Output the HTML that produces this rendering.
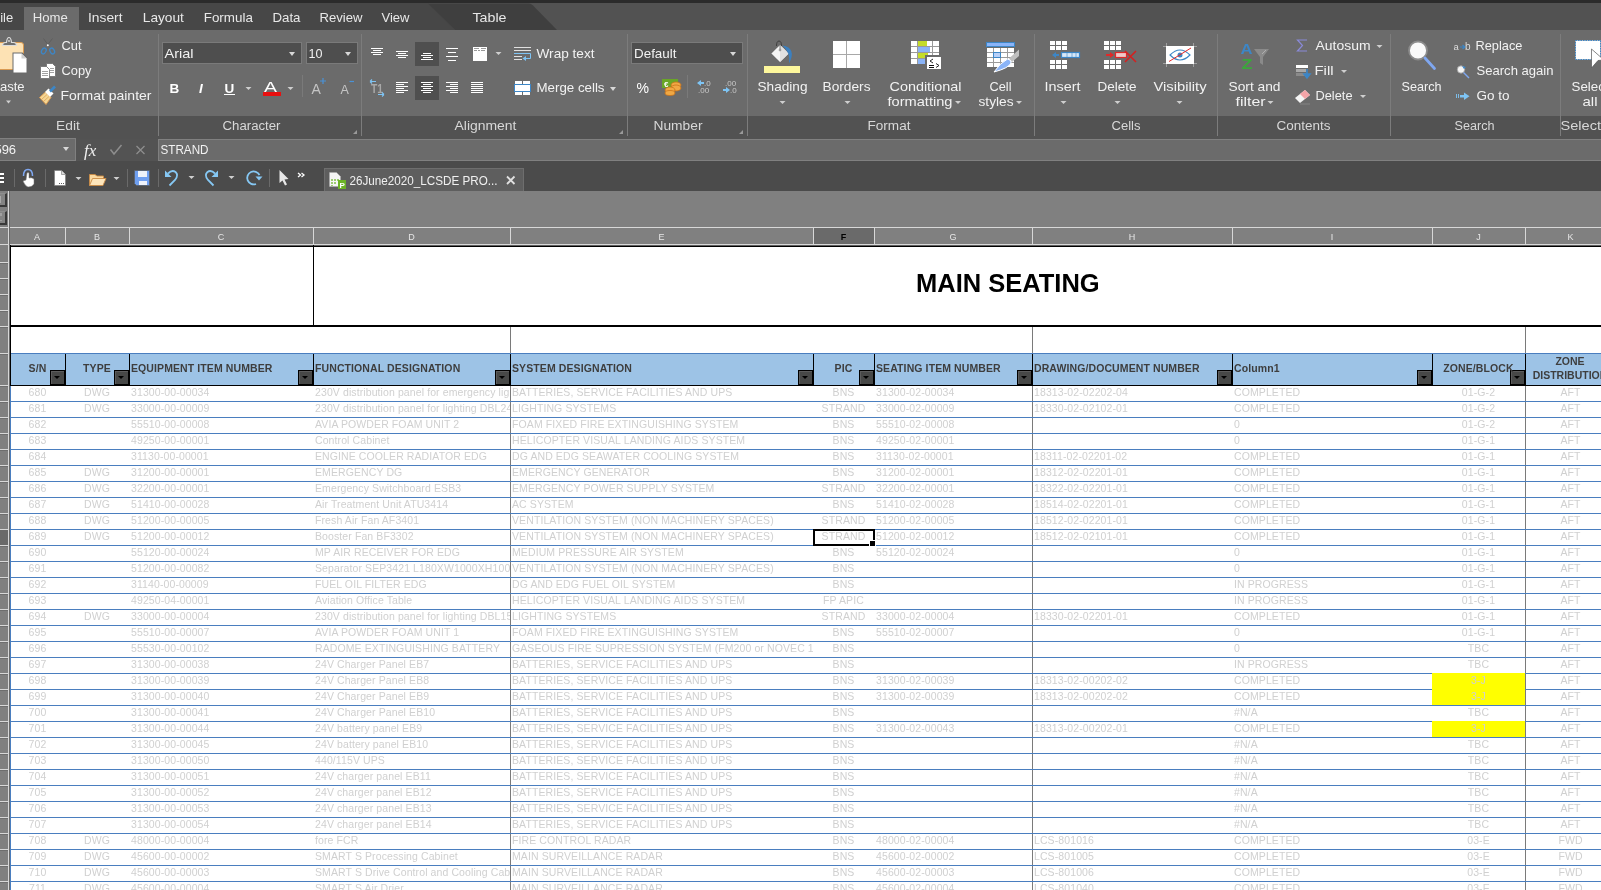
<!DOCTYPE html><html><head><meta charset="utf-8"><style>*{margin:0;padding:0;box-sizing:border-box}
html,body{width:1601px;height:890px;overflow:hidden;background:#808080;font-family:"Liberation Sans",sans-serif;position:relative}
.a{position:absolute}
#topstrip{position:absolute;left:0;top:0;width:1601px;height:3px;background:#2b2b2b}
#tabbar{position:absolute;left:0;top:3px;width:1601px;height:27px;background:#525252}
.tab{position:absolute;top:9px;font-size:14px;color:#e8e8e8;white-space:nowrap;line-height:16px}
#hometab{position:absolute;left:24px;top:7px;width:55px;height:23px;background:#6b6b6b}
#ribbon{position:absolute;left:0;top:30px;width:1601px;height:86px;background:#6b6b6b}
#labels{position:absolute;left:0;top:116px;width:1601px;height:23px;background:#525252}
.lbl{position:absolute;top:119px;font-size:13px;color:#dcdcdc;white-space:nowrap;line-height:16px}
.vsep{position:absolute;width:1px;background:#7c7c7c}
.rt{position:absolute;font-size:14px;color:#f0f0f0;white-space:nowrap;line-height:16px}
.dd{position:absolute;width:0;height:0;border-left:3.5px solid transparent;border-right:3.5px solid transparent;border-top:4px solid #d8d8d8}
.box{position:absolute;background:#4e4e4e;border:1px solid #7a7a7a}
#fbar{position:absolute;left:0;top:139px;width:1601px;height:22px;background:#535353}
#tbar{position:absolute;left:0;top:161px;width:1601px;height:30px;background:#4b4b4b}
#grid{position:absolute;left:0;top:0;width:1601px;height:890px}
.ch{position:absolute;top:228px;height:16px;font-size:9px;color:#e6e6e6;text-align:center;line-height:18px}
.ch.sel{background:#6a6a6a;color:#000;font-weight:bold}
.chsep{position:absolute;top:228px;width:1px;height:16px;background:#d8d8d8}
.c{position:absolute;height:15px;font-size:10.5px;line-height:15px;color:#d0d0d0;white-space:nowrap;overflow:hidden;letter-spacing:0.1px}
.ac{text-align:center}
.al{text-align:left}
.yel{position:absolute;height:16px;background:#ffff00}
.ddb{position:absolute;width:15px;height:15px;background:#474847;border:1px solid #000;box-shadow:inset 1px 1px 0 #5c5c5c}
.ddb::after{content:"";position:absolute;left:2.5px;top:5px;border-left:3px solid transparent;border-right:3px solid transparent;border-top:3px solid #000}
.ht{position:absolute;top:362px;font-size:10.5px;font-weight:bold;color:#3e3e3e;white-space:nowrap;line-height:12px;letter-spacing:0.1px}
.ht2{position:absolute;font-size:10.5px;font-weight:bold;color:#3e3e3e;white-space:nowrap;line-height:14px;overflow:hidden}
.title{position:absolute;font-size:25.5px;font-weight:bold;color:#000;white-space:nowrap;line-height:30px}
</style></head><body><div id="root" style="position:absolute;left:0;top:0;width:1601px;height:890px;will-change:transform">
<div id="topstrip"></div>
<div id="tabbar"></div>
<svg class="a" style="left:0;top:3px" width="1601" height="27"><polygon points="0,0 428,0 455,27 0,27" fill="#474747"/><path d="M428,0.5 H529 Q531,0.5 533,2.5 L557,27 H455 Z" fill="#3f3f3f"/></svg>
<div id="hometab"></div>
<div id="ribbon"></div>
<div id="labels"></div>
<div class="vsep" style="left:158px;top:34px;height:102px"></div>
<div class="vsep" style="left:361px;top:34px;height:102px"></div>
<div class="vsep" style="left:627px;top:34px;height:102px"></div>
<div class="vsep" style="left:747px;top:34px;height:102px"></div>
<div class="vsep" style="left:1034px;top:34px;height:102px"></div>
<div class="vsep" style="left:1217px;top:34px;height:102px"></div>
<div class="vsep" style="left:1390px;top:34px;height:102px"></div>
<div class="vsep" style="left:1560px;top:34px;height:102px"></div>
<!-- Edit group -->
<!-- Character -->
<div class="box" style="left:162px;top:42px;width:140px;height:22px"></div>
<div class="dd" style="left:289px;top:52px"></div>
<div class="box" style="left:306px;top:42px;width:52px;height:22px"></div>
<div class="dd" style="left:345px;top:52px"></div>
<!-- Number -->
<div class="box" style="left:631px;top:42px;width:112px;height:22px"></div>
<div class="dd" style="left:730px;top:52px"></div>
<div class="dd" style="left:610px;top:87px"></div>
<!-- Format -->
<!-- formula bar -->
<div id="fbar"></div>
<div class="box" style="left:-10px;top:138px;width:86px;height:23px;background:#6b6b6b;border-color:#808080"></div>
<div class="dd" style="left:63px;top:147px"></div>
<div class="box" style="left:158px;top:139px;width:1450px;height:22px;background:#6b6b6b;border-color:#808080"></div>
<!-- toolbar -->
<div id="tbar"></div>
<div class="a" style="left:324px;top:168px;width:200px;height:23px;background:#5e5e5e;border:1px solid #6e6e6e;border-bottom:none"></div>
<svg class="a" style="left:0;top:0" width="1601" height="195">
<!-- PASTE -->
<path d="M-1,42.5 H21 Q23.5,42.5 23.5,45 V69.5 H-1 Z" fill="#fde2b4" stroke="#d99a52" stroke-width="1"/>
<path d="M2.5,45.5 Q2.5,42.5 5.5,42.5 H6.5 Q7,37.5 9,37.5 Q11,37.5 11.5,42.5 H13.5 Q16.5,42.5 16.5,45.5 Z" fill="#6f6f6f" stroke="#dcdcdc" stroke-width="1.2"/>
<circle cx="9" cy="41" r="0.9" fill="#dcdcdc"/>
<path d="M12.5,52.5 H22.5 L27.5,57.5 V73.5 H12.5 Z" fill="#6b6b6b"/>
<path d="M13.5,53.5 H21.5 L26.5,58.5 V72.5 H13.5 Z" fill="#ffffff"/>
<path d="M21.5,53.5 V58.5 H26.5" fill="#d0d0d0"/>
<path d="M6,100.5 H11 L8.5,103.5 Z" fill="#cfcfcf"/>
<!-- CUT -->
<path d="M43.5,38.5 L48.5,45.5 M52.5,38.5 L47,45.5" stroke="#5c5c5c" stroke-width="0.9"/>
<circle cx="47.8" cy="45.3" r="1" fill="#ffffff"/>
<ellipse cx="43.8" cy="51" rx="2.1" ry="3.1" fill="none" stroke="#3d86c6" stroke-width="1.3" transform="rotate(30 43.8 51)"/>
<ellipse cx="52.2" cy="51" rx="2.1" ry="3.1" fill="none" stroke="#3d86c6" stroke-width="1.3" transform="rotate(-30 52.2 51)"/>
<!-- COPY -->
<path d="M46.5,63.5 H52.5 L55.5,66.5 V76.5 H46.5 Z" fill="#fff" stroke="#6b6b6b" stroke-width="0.8"/>
<path d="M40.5,66.5 H46.5 L49.5,69.5 V78.5 H40.5 Z" fill="#fff" stroke="#6b6b6b" stroke-width="0.8"/>
<path d="M42,71.5 H48 M42,73.5 H48 M42,75.5 H48 M50,68.5 H54 M50,70.5 H54 M50,72.5 H54" stroke="#8a8a8a" stroke-width="0.8"/>
<!-- FORMAT PAINTER -->
<path d="M39.5,97.5 L45.5,92 L51,97.5 L46,104.5 Z" fill="#f5d693" stroke="#d99a52" stroke-width="1"/>
<path d="M41.5,99.5 L47,94.5 M43.5,101.5 L49,96.5" stroke="#d99a52" stroke-width="0.7"/>
<path d="M45,92 L48.5,88.5 L53.5,93.5 L50,97 Z" fill="#ffffff"/>
<path d="M50,91.5 L55,86.5" stroke="#3d86c6" stroke-width="2.6"/>
<!-- CHARACTER small buttons -->
<text x="169.5" y="93" font-family="Liberation Sans" font-weight="bold" font-size="13.5" fill="#fff">B</text>
<text x="199" y="93" font-family="Liberation Sans" font-weight="bold" font-style="italic" font-size="13.5" fill="#fff">I</text>
<text x="224.5" y="93" font-family="Liberation Sans" font-weight="bold" font-size="13.5" fill="#fff">U</text>
<rect x="224" y="94" width="11" height="1" fill="#fff"/>
<path d="M245.5,87 H251.5 L248.5,90 Z" fill="#cfcfcf"/>
<text x="264" y="92" font-family="Liberation Sans" font-size="14" fill="#fff" textLength="13" lengthAdjust="spacingAndGlyphs">A</text>
<rect x="263" y="92" width="18" height="4" fill="#e81010"/>
<path d="M287.5,87 H293.5 L290.5,90 Z" fill="#cfcfcf"/>
<rect x="302" y="75" width="1" height="22" fill="#7a7a7a"/>
<text x="311.5" y="93.5" font-family="Liberation Sans" font-size="14" fill="#c4c4c4">A</text>
<path d="M320,81 H326 M323,78 V84" stroke="#4a92d6" stroke-width="1.2"/>
<text x="340.5" y="93.5" font-family="Liberation Sans" font-size="12.5" fill="#c4c4c4">A</text>
<path d="M349.5,81.5 H354" stroke="#4a92d6" stroke-width="1.2"/>
<!-- T1 icon (character) -->
<g id="t1">
<text x="371" y="93" font-family="Liberation Sans" font-weight="bold" font-size="12" fill="#a8a8a8" textLength="12" lengthAdjust="spacingAndGlyphs">T1</text>
<path d="M370,81.5 H376 M370,81.5 L372,79.5 M370,81.5 L372,83.5" stroke="#7ec4f4" stroke-width="1.1" fill="none"/>
<path d="M378,94.5 H384 M384,94.5 L382,92.5 M384,94.5 L382,96.5" stroke="#7ec4f4" stroke-width="1.1" fill="none"/>
</g>
<!-- ALIGNMENT -->
<rect x="415" y="42" width="24" height="24" fill="#4f4f4f"/>
<rect x="415" y="76" width="24" height="24" fill="#4f4f4f"/>
<g fill="#ffffff" shape-rendering="crispEdges">
<rect x="371" y="48" width="12" height="1"/><rect x="373" y="50" width="8" height="1"/><rect x="371" y="52" width="12" height="1"/><rect x="373" y="54" width="8" height="1"/>
<rect x="396" y="51" width="12" height="1"/><rect x="398" y="53" width="8" height="1"/><rect x="396" y="55" width="12" height="1"/><rect x="398" y="57" width="8" height="1"/>
<rect x="423" y="53" width="8" height="1"/><rect x="421" y="55" width="12" height="1"/><rect x="423" y="57" width="8" height="1"/><rect x="421" y="59" width="12" height="1"/>
<rect x="446" y="48" width="12" height="1"/><rect x="448" y="52" width="8" height="1"/><rect x="446" y="56" width="12" height="1"/><rect x="448" y="60" width="8" height="1"/>
<rect x="473" y="47" width="14" height="14"/>
<rect x="396" y="82" width="12" height="1"/><rect x="396" y="84" width="8" height="1"/><rect x="396" y="86" width="12" height="1"/><rect x="396" y="88" width="8" height="1"/><rect x="396" y="90" width="12" height="1"/><rect x="396" y="92" width="8" height="1"/>
<rect x="421" y="82" width="12" height="1"/><rect x="423" y="84" width="8" height="1"/><rect x="421" y="86" width="12" height="1"/><rect x="423" y="88" width="8" height="1"/><rect x="421" y="90" width="12" height="1"/><rect x="423" y="92" width="8" height="1"/>
<rect x="446" y="82" width="12" height="1"/><rect x="450" y="84" width="8" height="1"/><rect x="446" y="86" width="12" height="1"/><rect x="450" y="88" width="8" height="1"/><rect x="446" y="90" width="12" height="1"/><rect x="450" y="92" width="8" height="1"/>
<rect x="471" y="82" width="12" height="1"/><rect x="471" y="84" width="12" height="1"/><rect x="471" y="86" width="12" height="1"/><rect x="471" y="88" width="12" height="1"/><rect x="471" y="90" width="12" height="1"/><rect x="471" y="92" width="12" height="1"/>
</g>
<g fill="#9a9a9a" shape-rendering="crispEdges"><rect x="474" y="48" width="5" height="1"/><rect x="481" y="48" width="5" height="1"/><rect x="474" y="50" width="3" height="1"/><rect x="478" y="50" width="2" height="1"/><rect x="481" y="50" width="4" height="1"/></g>
<path d="M495.5,52 H501.5 L498.5,55 Z" fill="#cfcfcf"/>
<!-- WRAP TEXT -->
<g shape-rendering="crispEdges">
<rect x="514" y="47" width="17" height="1" fill="#e0e0e0"/>
<rect x="514" y="50" width="17" height="1" fill="#e0e0e0"/>
<rect x="514" y="53" width="13" height="1" fill="#7ec4f4"/>
<rect x="514" y="56" width="8" height="1" fill="#e0e0e0"/>
<rect x="514" y="59" width="8" height="1" fill="#e0e0e0"/>
</g>
<path d="M526,53.5 H530.5 V58.5 H525" stroke="#7ec4f4" stroke-width="1" fill="none"/>
<path d="M522.5,58.5 L526,56 V61 Z" fill="#7ec4f4"/>
<!-- MERGE CELLS -->
<g fill="#fff" shape-rendering="crispEdges">
<rect x="515" y="81" width="7" height="3"/><rect x="523" y="81" width="7" height="3"/>
<rect x="515" y="92" width="7" height="3"/><rect x="523" y="92" width="7" height="3"/>
</g>
<rect x="514.5" y="84.5" width="16" height="7" fill="#fff" stroke="#3d86c6" stroke-width="1"/>
<!-- NUMBER -->
<text x="636.5" y="92.5" font-family="Liberation Sans" font-size="14" fill="#fff" textLength="12.5" lengthAdjust="spacingAndGlyphs">%</text>
<rect x="662" y="79" width="16" height="9" fill="#6aa626"/>
<text x="664" y="87" font-family="Liberation Sans" font-weight="bold" font-size="8" fill="#fff">€</text>
<ellipse cx="676" cy="85" rx="5" ry="3" fill="#f0a844" stroke="#c9731a" stroke-width="0.8"/>
<ellipse cx="676" cy="88" rx="5" ry="3" fill="#f0a844" stroke="#c9731a" stroke-width="0.8"/>
<ellipse cx="670" cy="90" rx="5" ry="3" fill="#f0a844" stroke="#c9731a" stroke-width="0.8"/>
<ellipse cx="670" cy="93" rx="5" ry="2.5" fill="#f0a844" stroke="#c9731a" stroke-width="0.8"/>
<rect x="687" y="75" width="1" height="23" fill="#7a7a7a"/>
<path d="M697,83 L701,80 V82 H704 V84 H701 V86 Z" fill="#7ec4f4"/>
<text x="704" y="86" font-family="Liberation Sans" font-size="8" fill="#c8c8c8">.0</text>
<text x="698" y="93" font-family="Liberation Sans" font-size="8" fill="#c8c8c8">.00</text>
<text x="725" y="86" font-family="Liberation Sans" font-size="8" fill="#c8c8c8">.00</text>
<path d="M730,90 L726,87 V89 H723 V91 H726 V93 Z" fill="#7ec4f4"/>
<text x="730" y="93" font-family="Liberation Sans" font-size="8" fill="#c8c8c8">.0</text>
</svg>
<svg class="a" style="left:0;top:0" width="1601" height="195">
<!-- SHADING -->
<path d="M776.5,46 Q776.5,41 779,41 Q781.5,41 781.5,46" fill="none" stroke="#3a3a3a" stroke-width="0.9"/>
<path d="M780,45 L788.6,53.5 L780,62 L771.4,53.5 Z" fill="#f4f4f4"/>
<path d="M780,45 L788.6,53.5 L780,62" fill="#e0e0e0"/>
<path d="M780,45 V49" stroke="#555" stroke-width="0.7"/>
<circle cx="780" cy="50" r="0.9" fill="none" stroke="#555" stroke-width="0.6"/>
<path d="M782.5,45.5 Q797,48 789,63.5 Q791,53 782.5,45.5 Z" fill="#3b80c0"/>
<rect x="764" y="66" width="36" height="7" fill="#fdf79c"/>
<path d="M779.5,101 H785.5 L782.5,104 Z" fill="#cfcfcf"/>
<!-- BORDERS -->
<rect x="833" y="41" width="27" height="27" fill="#fff"/>
<rect x="846" y="41" width="1" height="27" fill="#a8a8a8"/>
<rect x="833" y="54" width="27" height="1" fill="#a8a8a8"/>
<path d="M844.5,101 H850.5 L847.5,104 Z" fill="#cfcfcf"/>
<!-- CONDITIONAL FORMATTING -->
<g shape-rendering="crispEdges">
<rect x="911" y="41" width="28" height="23" fill="#fff"/>
<rect x="918" y="41" width="9" height="5" fill="#c5dc2a"/>
<rect x="918" y="47" width="12" height="5" fill="#8ab4f8"/>
<rect x="918" y="53" width="10" height="5" fill="#c5dc2a"/>
<rect x="918" y="59" width="7" height="5" fill="#8ab4f8"/>
<rect x="917" y="41" width="1" height="23" fill="#9a9a9a"/>
<rect x="932" y="41" width="1" height="23" fill="#9a9a9a"/>
<rect x="911" y="46" width="28" height="1" fill="#9a9a9a"/>
<rect x="911" y="52" width="28" height="1" fill="#9a9a9a"/>
<rect x="911" y="58" width="28" height="1" fill="#9a9a9a"/>
<rect x="925" y="55" width="17" height="15" fill="#6b6b6b"/>
<rect x="927" y="57" width="14" height="12" fill="#fff"/>
</g>
<path d="M933,59 L930,61 L933,63 M936,63.5 L939,65.5 L936,67.5" stroke="#111" stroke-width="0.9" fill="none"/><rect x="929" y="65" width="5" height="1" fill="#111"/><rect x="929" y="67" width="5" height="1" fill="#111"/>
<!-- CELL STYLES -->
<g shape-rendering="crispEdges">
<rect x="986" y="42" width="29" height="5" fill="#3d86c6"/>
<rect x="987" y="43" width="27" height="3" fill="#8ab4f8"/>
<rect x="987" y="48" width="27" height="19" fill="#fff"/>
<rect x="993" y="48" width="1" height="19" fill="#9a9a9a"/><rect x="1000" y="48" width="1" height="19" fill="#9a9a9a"/><rect x="1007" y="48" width="1" height="19" fill="#9a9a9a"/>
<rect x="987" y="52" width="27" height="1" fill="#9a9a9a"/><rect x="987" y="57" width="27" height="1" fill="#9a9a9a"/><rect x="987" y="62" width="27" height="1" fill="#9a9a9a"/>
<rect x="993" y="52" width="8" height="6" fill="#3d86c6"/>
<rect x="994" y="53" width="6" height="4" fill="#b8d0f8"/>
</g>
<path d="M1019,49.5 V56 L1012,62 L1009,58.5 Z" fill="#c0c0c0"/>
<path d="M1007.5,59 Q1012,60 1011,63 Q1009,68 994,72 Q1000,63 1007.5,59 Z" fill="#8ab4f8" stroke="#fff" stroke-width="1"/>
<!-- INSERT -->
<g fill="#fff" shape-rendering="crispEdges">
<rect x="1050" y="41" width="5" height="4"/><rect x="1056" y="41" width="5" height="4"/><rect x="1062" y="41" width="5" height="4"/>
<rect x="1050" y="46" width="5" height="4"/><rect x="1056" y="46" width="5" height="4"/><rect x="1062" y="46" width="5" height="4"/>
<rect x="1050" y="60" width="5" height="4"/><rect x="1056" y="60" width="5" height="4"/><rect x="1062" y="60" width="5" height="4"/>
<rect x="1050" y="65" width="5" height="4"/><rect x="1056" y="65" width="5" height="4"/><rect x="1062" y="65" width="5" height="4"/>
<rect x="1104" y="41" width="5" height="4"/><rect x="1110" y="41" width="5" height="4"/><rect x="1116" y="41" width="5" height="4"/>
<rect x="1104" y="46" width="5" height="4"/><rect x="1110" y="46" width="5" height="4"/><rect x="1116" y="46" width="5" height="4"/>
<rect x="1104" y="60" width="5" height="4"/><rect x="1110" y="60" width="5" height="4"/><rect x="1116" y="60" width="5" height="4"/>
<rect x="1104" y="65" width="5" height="4"/><rect x="1110" y="65" width="5" height="4"/><rect x="1116" y="65" width="5" height="4"/>
</g>
<path d="M1052,55 L1056,52 V54 H1059 V56 H1056 V58 Z" fill="#3d86c6"/>
<rect x="1061.5" y="52.5" width="18" height="5" fill="#d8e8f8" stroke="#3d86c6" stroke-width="1.2"/>
<path d="M1067,53 V57 M1072,53 V57 M1076,53 V57" stroke="#3d86c6" stroke-width="0.6"/>
<path d="M1060.5,101 H1066.5 L1063.5,104 Z" fill="#cfcfcf"/>
<!-- DELETE -->
<path d="M1114,55 L1110,52 V54 H1106 V56 H1110 V58 Z" fill="#e02828"/>
<rect x="1115.5" y="52.5" width="11" height="5" fill="#f0c8c8" stroke="#e02828" stroke-width="1.2"/>
<path d="M1125,51 L1136,62 M1136,51 L1125,62" stroke="#d42020" stroke-width="1.6"/>
<path d="M1114.5,101 H1120.5 L1117.5,104 Z" fill="#cfcfcf"/>
<!-- VISIBILITY -->
<path d="M1163,46.5 H1197 M1163,63.5 H1197 M1166.5,43 V67 M1193.5,43 V67" stroke="#a0a0a0" stroke-width="1"/>
<rect x="1166" y="46" width="28" height="18" fill="#fff"/>
<path d="M1170,55 Q1180,45 1190,55 Q1180,65 1170,55 Z" fill="none" stroke="#3d86c6" stroke-width="1.1"/>
<circle cx="1180" cy="55" r="2.5" fill="#3d86c6"/>
<path d="M1169,61.5 L1191,48" stroke="#e82828" stroke-width="1"/>
<path d="M1176.5,101 H1182.5 L1179.5,104 Z" fill="#cfcfcf"/>
<!-- SORT & FILTER -->
<text x="1240.5" y="54" font-family="Liberation Sans" font-weight="bold" font-size="15" fill="#3d86c6" textLength="12" lengthAdjust="spacingAndGlyphs">A</text>
<text x="1241.5" y="69" font-family="Liberation Sans" font-weight="bold" font-size="15" fill="#3aa83a" textLength="11" lengthAdjust="spacingAndGlyphs">Z</text>
<path d="M1254,49 H1269 L1263,57 V65 L1260,63 V57 Z" fill="#8a8a8a"/>
<path d="M1262,54 L1266,50" stroke="#c8c8c8" stroke-width="0.6"/>
<path d="M1267.5,101 H1273.5 L1270.5,104 Z" fill="#cfcfcf"/>
<!-- AUTOSUM -->
<path d="M1307,40 H1297.5 L1302.5,45.5 L1297.5,51 H1307" fill="none" stroke="#8a8ad8" stroke-width="1.2"/>
<path d="M1376.5,45 H1382.5 L1379.5,48 Z" fill="#cfcfcf"/>
<!-- FILL -->
<rect x="1296" y="65" width="12" height="3" fill="#fff"/>
<rect x="1296" y="69" width="10" height="3" fill="#a8a8a8"/>
<rect x="1296" y="73" width="10" height="3" fill="#8a8a8a"/>
<path d="M1307,69 V76 M1304,74 L1307,78 L1310,74 Z" stroke="#3d86c6" stroke-width="1.6" fill="#3d86c6"/>
<path d="M1341,70 H1347 L1344,73 Z" fill="#cfcfcf"/>
<!-- ERASER -->
<path d="M1295,98 L1305,90 L1310,95 L1300,103 Z" fill="#f4f4f4"/>
<path d="M1300,94 L1305,90 L1310,95 L1305,99 Z" fill="#f4a4a8"/>
<path d="M1300,104 H1310" stroke="#8a8a8a" stroke-width="0.8"/>
<path d="M1360,95 H1366 L1363,98 Z" fill="#cfcfcf"/>
<!-- SEARCH -->
<circle cx="1418" cy="50.5" r="9" fill="#fafafa" stroke="#8c8c8c" stroke-width="1.8"/>
<path d="M1425,58 L1434.5,68.5" stroke="#7fa7f0" stroke-width="2.8" stroke-linecap="round"/>
<text x="1453.5" y="50" font-family="Liberation Sans" font-size="9.5" fill="#dcdcdc">a</text>
<path d="M1460,47 H1464 M1462.5,45 L1465,47 L1462.5,49" stroke="#3d86c6" stroke-width="1.2" fill="none"/>
<text x="1465" y="50" font-family="Liberation Sans" font-size="10" fill="#dcdcdc">b</text>
<circle cx="1461" cy="69.5" r="3.7" fill="#f4f4f4" stroke="#9a9a9a" stroke-width="0.8"/>
<path d="M1463.5,72.5 L1469,78" stroke="#7fa7f0" stroke-width="1.4"/>
<path d="M1462,66 L1466,67 L1464,69 Z" fill="#3d86c6"/>
<path d="M1456.5,94 V98 M1458.5,94 V98" stroke="#7ec4f4" stroke-width="0.9"/><rect x="1460" y="95" width="5" height="2.5" fill="#7ec4f4"/><path d="M1464,92.5 L1469.5,96.2 L1464,100 Z" fill="#7ec4f4"/>
<!-- SELECT ALL -->
<rect x="1575.5" y="40.5" width="25" height="19" fill="#fff" stroke="#3d86c6" stroke-width="1" stroke-dasharray="1.5,1"/>
<path d="M1591.5,49 L1604,60 L1598,60.5 L1591.5,68 Z" fill="#fff" stroke="#555" stroke-width="0.7"/>
<!-- TOOLBAR -->
<rect x="0" y="173" width="4" height="2" fill="#fff"/><rect x="0" y="177" width="4" height="2" fill="#fff"/><rect x="0" y="181" width="4" height="2" fill="#fff"/>
<rect x="14" y="169" width="1" height="18" fill="#6a6a6a"/>
<path d="M23.5,176 Q23.5,169.5 28,169.5 Q32.5,169.5 32.5,176" fill="none" stroke="#7fa7f0" stroke-width="1.5"/>
<path d="M27,173 Q28,172 29,173 V178 Q31,177 34,179 V184 Q32,187 28,187 Q25,186 23,181 L26,180 Z" fill="#fff" stroke="#777" stroke-width="0.5"/>
<rect x="45" y="169" width="1" height="18" fill="#6a6a6a"/>
<path d="M54.5,170.5 H61.5 L65.5,174.5 V185.5 H54.5 Z" fill="#fff" stroke="#777" stroke-width="0.6"/>
<path d="M61.5,170.5 V174.5 H65.5" fill="#ddd" stroke="#777" stroke-width="0.6"/>
<path d="M59,183.5 H60 M61,183.5 H62 M63,183.5 H64" stroke="#333" stroke-width="0.8"/>
<path d="M75.5,177 H81.5 L78.5,180 Z" fill="#cfcfcf"/>
<path d="M89.5,185.5 V174.5 H95 L97,176 H103.5 V179" fill="#fbd9a0" stroke="#c98a44" stroke-width="0.9"/>
<path d="M89.5,185.5 L92.5,178.5 H106 L103,185.5 Z" fill="#fde6bc" stroke="#c98a44" stroke-width="0.9"/>
<path d="M113.5,177 H119.5 L116.5,180 Z" fill="#cfcfcf"/>
<rect x="127" y="169" width="1" height="18" fill="#6a6a6a"/>
<path d="M134.5,170.5 H149.5 V185.5 H136.5 L134.5,183.5 Z" fill="#6f9ff0" stroke="#5a5a5a" stroke-width="0.6"/>
<rect x="138" y="171" width="9" height="6" fill="#eef2fa"/>
<rect x="139" y="181" width="8" height="4" fill="#eef2fa"/>
<rect x="158" y="169" width="1" height="18" fill="#6a6a6a"/>
<!-- undo -->
<path d="M168,173.5 Q172,169.5 175.5,172 Q179,175 175,180 L169.5,185.5" fill="none" stroke="#86c8f4" stroke-width="1.8"/>
<path d="M165,170.5 L165,177 L171.5,177 Z" fill="#86c8f4"/>
<path d="M188.5,176 H194.5 L191.5,179 Z" fill="#cfcfcf"/>
<!-- redo -->
<path d="M215,173.5 Q211,169.5 207.5,172 Q204,175 208,180 L213.5,185.5" fill="none" stroke="#86c8f4" stroke-width="1.8"/>
<path d="M218,170.5 L218,177 L211.5,177 Z" fill="#86c8f4"/>
<path d="M228.5,176 H234.5 L231.5,179 Z" fill="#cfcfcf"/>
<!-- repeat -->
<path d="M259.5,175 A6.5,6.5 0 1 0 256,184" fill="none" stroke="#86c8f4" stroke-width="1.8"/>
<path d="M255.5,176.5 H262.5 L259,180.5 Z" fill="#86c8f4"/>
<rect x="269" y="169" width="1" height="18" fill="#6a6a6a"/>
<!-- pointer -->
<path d="M279.5,170 V183 L282.5,180.5 L285,185.5 L287,184.5 L284.5,179.5 L288.5,179 Z" fill="#e8e8e8"/>
<path d="M298,173 L300.5,175 L298,177 M301.5,173 L304,175 L301.5,177" stroke="#fff" stroke-width="1.3" fill="none"/>
<!-- doc tab icon -->
<path d="M329.5,172.5 H336.5 L340.5,176.5 V186.5 H329.5 Z" fill="#f4f4f4" stroke="#aaa" stroke-width="0.5"/>
<g fill="#9ccc70" shape-rendering="crispEdges"><rect x="331" y="179" width="2" height="2"/><rect x="334" y="179" width="2" height="2"/><rect x="337" y="179" width="2" height="2"/><rect x="331" y="182" width="2" height="2"/><rect x="334" y="182" width="2" height="2"/><rect x="331" y="185" width="2" height="1"/></g>
<rect x="338" y="180" width="8" height="9" fill="#6cb226"/>
<text x="339.5" y="188" font-family="Liberation Sans" font-weight="bold" font-size="8" fill="#fff">P</text>
<path d="M507,176.5 L514.5,184 M514.5,176.5 L507,184" stroke="#e0e0e0" stroke-width="1.8"/>
<!-- formula bar icons -->
<text x="84" y="156" font-family="Liberation Serif" font-style="italic" font-size="17" fill="#f0f0f0">fx</text>
<path d="M110.5,149.5 L114,154 L121.5,145" fill="none" stroke="#8e8e8e" stroke-width="1.5"/>
<path d="M136.5,146 L144.5,154 M144.5,146 L136.5,154" stroke="#8e8e8e" stroke-width="1.3"/>
<path d="M955,101 H961 L958,104 Z" fill="#cfcfcf"/>
<path d="M1016,101 H1022 L1019,104 Z" fill="#cfcfcf"/>
<path d="M357,130 V134 H353 Z" fill="#9a9a9a"/>
<path d="M623,130 V134 H619 Z" fill="#9a9a9a"/>
<path d="M743,130 V134 H739 Z" fill="#9a9a9a"/>
</svg>
<svg class="a" style="left:0;top:0" width="1601" height="195" font-family="Liberation Sans">
<text x="13.2" y="22" font-size="13" fill="#e8e8e8" text-anchor="end">File</text>
<text x="32.8" y="22" font-size="13" fill="#e8e8e8" textLength="35.1" lengthAdjust="spacingAndGlyphs">Home</text>
<text x="88.0" y="22" font-size="13" fill="#e8e8e8" textLength="34.5" lengthAdjust="spacingAndGlyphs">Insert</text>
<text x="142.8" y="22" font-size="13" fill="#e8e8e8" textLength="41.1" lengthAdjust="spacingAndGlyphs">Layout</text>
<text x="203.7" y="22" font-size="13" fill="#e8e8e8" textLength="49.2" lengthAdjust="spacingAndGlyphs">Formula</text>
<text x="272.5" y="22" font-size="13" fill="#e8e8e8" textLength="28.0" lengthAdjust="spacingAndGlyphs">Data</text>
<text x="319.5" y="22" font-size="13" fill="#e8e8e8" textLength="43.0" lengthAdjust="spacingAndGlyphs">Review</text>
<text x="381.5" y="22" font-size="13" fill="#e8e8e8" textLength="28.0" lengthAdjust="spacingAndGlyphs">View</text>
<text x="472.5" y="22" font-size="13" fill="#e8e8e8" textLength="34.0" lengthAdjust="spacingAndGlyphs">Table</text>
<text x="24.5" y="91" font-size="13" fill="#f2f2f2" text-anchor="end">Paste</text>
<text x="61.5" y="50" font-size="13" fill="#f2f2f2" textLength="20.0" lengthAdjust="spacingAndGlyphs">Cut</text>
<text x="61.5" y="75" font-size="13" fill="#f2f2f2" textLength="30.0" lengthAdjust="spacingAndGlyphs">Copy</text>
<text x="60.5" y="100" font-size="13" fill="#f2f2f2" textLength="91.0" lengthAdjust="spacingAndGlyphs">Format painter</text>
<text x="164.5" y="58" font-size="13" fill="#f2f2f2" textLength="29.0" lengthAdjust="spacingAndGlyphs">Arial</text>
<text x="308.5" y="58" font-size="13" fill="#f2f2f2" textLength="14.0" lengthAdjust="spacingAndGlyphs">10</text>
<text x="536.5" y="58" font-size="13" fill="#f2f2f2" textLength="58.0" lengthAdjust="spacingAndGlyphs">Wrap text</text>
<text x="536.5" y="92" font-size="13" fill="#f2f2f2" textLength="68.0" lengthAdjust="spacingAndGlyphs">Merge cells</text>
<text x="634.0" y="58" font-size="13" fill="#f2f2f2" textLength="42.5" lengthAdjust="spacingAndGlyphs">Default</text>
<text x="757.5" y="91" font-size="13" fill="#f2f2f2" textLength="50.0" lengthAdjust="spacingAndGlyphs">Shading</text>
<text x="822.5" y="91" font-size="13" fill="#f2f2f2" textLength="48.0" lengthAdjust="spacingAndGlyphs">Borders</text>
<text x="889.5" y="91" font-size="13" fill="#f2f2f2" textLength="72.0" lengthAdjust="spacingAndGlyphs">Conditional</text>
<text x="887.5" y="106" font-size="13" fill="#f2f2f2" textLength="65.0" lengthAdjust="spacingAndGlyphs">formatting</text>
<text x="989.5" y="91" font-size="13" fill="#f2f2f2" textLength="22.0" lengthAdjust="spacingAndGlyphs">Cell</text>
<text x="978.5" y="106" font-size="13" fill="#f2f2f2" textLength="35.0" lengthAdjust="spacingAndGlyphs">styles</text>
<text x="1044.5" y="91" font-size="13" fill="#f2f2f2" textLength="36.0" lengthAdjust="spacingAndGlyphs">Insert</text>
<text x="1097.5" y="91" font-size="13" fill="#f2f2f2" textLength="39.0" lengthAdjust="spacingAndGlyphs">Delete</text>
<text x="1153.5" y="91" font-size="13" fill="#f2f2f2" textLength="53.0" lengthAdjust="spacingAndGlyphs">Visibility</text>
<text x="1228.5" y="91" font-size="13" fill="#f2f2f2" textLength="52.0" lengthAdjust="spacingAndGlyphs">Sort and</text>
<text x="1235.5" y="106" font-size="13" fill="#f2f2f2" textLength="30.0" lengthAdjust="spacingAndGlyphs">filter</text>
<text x="1315.5" y="50" font-size="13" fill="#f2f2f2" textLength="55.0" lengthAdjust="spacingAndGlyphs">Autosum</text>
<text x="1314.5" y="75" font-size="13" fill="#f2f2f2" textLength="19.0" lengthAdjust="spacingAndGlyphs">Fill</text>
<text x="1315.5" y="100" font-size="13" fill="#f2f2f2" textLength="37.0" lengthAdjust="spacingAndGlyphs">Delete</text>
<text x="1401.5" y="91" font-size="13" fill="#f2f2f2" textLength="40.0" lengthAdjust="spacingAndGlyphs">Search</text>
<text x="1475.5" y="50" font-size="13" fill="#f2f2f2" textLength="47.0" lengthAdjust="spacingAndGlyphs">Replace</text>
<text x="1476.5" y="75" font-size="13" fill="#f2f2f2" textLength="77.0" lengthAdjust="spacingAndGlyphs">Search again</text>
<text x="1476.5" y="100" font-size="13" fill="#f2f2f2" textLength="33.0" lengthAdjust="spacingAndGlyphs">Go to</text>
<text x="1571.5" y="91" font-size="13" fill="#f2f2f2" textLength="37.0" lengthAdjust="spacingAndGlyphs">Select</text>
<text x="1582.5" y="106" font-size="13" fill="#f2f2f2" textLength="15.0" lengthAdjust="spacingAndGlyphs">all</text>
<text x="56.0" y="130" font-size="12.5" fill="#d8d8d8" textLength="23.8" lengthAdjust="spacingAndGlyphs">Edit</text>
<text x="222.5" y="130" font-size="12.5" fill="#d8d8d8" textLength="58.0" lengthAdjust="spacingAndGlyphs">Character</text>
<text x="454.5" y="130" font-size="12.5" fill="#d8d8d8" textLength="62.0" lengthAdjust="spacingAndGlyphs">Alignment</text>
<text x="653.5" y="130" font-size="12.5" fill="#d8d8d8" textLength="49.0" lengthAdjust="spacingAndGlyphs">Number</text>
<text x="867.5" y="130" font-size="12.5" fill="#d8d8d8" textLength="43.0" lengthAdjust="spacingAndGlyphs">Format</text>
<text x="1111.5" y="130" font-size="12.5" fill="#d8d8d8" textLength="29.0" lengthAdjust="spacingAndGlyphs">Cells</text>
<text x="1276.5" y="130" font-size="12.5" fill="#d8d8d8" textLength="54.0" lengthAdjust="spacingAndGlyphs">Contents</text>
<text x="1454.5" y="130" font-size="12.5" fill="#d8d8d8" textLength="40.0" lengthAdjust="spacingAndGlyphs">Search</text>
<text x="1560.5" y="130" font-size="12.5" fill="#d8d8d8" textLength="60.0" lengthAdjust="spacingAndGlyphs">Selection</text>
<text x="16.1" y="154" font-size="13" fill="#f2f2f2" text-anchor="end">F596</text>
<text x="160.5" y="154" font-size="13" fill="#f2f2f2" textLength="48.0" lengthAdjust="spacingAndGlyphs">STRAND</text>
<text x="349.5" y="185" font-size="13" fill="#f0f0f0" textLength="148.0" lengthAdjust="spacingAndGlyphs">26June2020_LCSDE PRO...</text>
</svg>
<div class="a" style="left:10px;top:245px;width:1591px;height:645px;background:#fff"></div>
<div class="a" style="left:0;top:227px;width:1601px;height:1px;background:#d8d8d8"></div>
<div class="a" style="left:0;top:244px;width:1601px;height:1px;background:#d8d8d8"></div>
<div class="a" style="left:8px;top:191px;width:1px;height:699px;background:#d8d8d8"></div>
<div class="a" style="left:9px;top:191px;width:1px;height:699px;background:#6a6a6a"></div>
<div class="a" style="left:-3px;top:193px;width:10px;height:14px;border-right:2px solid #383838;border-bottom:2px solid #383838;border-top:1px solid #8e8e8e;background:#838383"></div>
<div class="a" style="left:-3px;top:211px;width:10px;height:14px;border-right:2px solid #383838;border-bottom:2px solid #383838;border-top:1px solid #8e8e8e;background:#838383"></div>
<div class="a" style="left:0;top:196px;width:1px;height:7px;background:#a8a8a8"></div>
<div class="a" style="left:0;top:213px;width:2px;height:3px;background:#a0a0a0"></div>
<div class="a" style="left:0;top:220px;width:2px;height:1px;background:#a0a0a0"></div>
<div class="a" style="left:0;top:534px;width:2px;height:7px;background:#111"></div>
<div class="a" style="left:0;top:262px;width:8px;height:1px;background:#d8d8d8"></div>
<div class="a" style="left:0;top:263px;width:8px;height:1px;background:#6e6e6e"></div>
<div class="a" style="left:0;top:278px;width:8px;height:1px;background:#d8d8d8"></div>
<div class="a" style="left:0;top:279px;width:8px;height:1px;background:#6e6e6e"></div>
<div class="a" style="left:0;top:294px;width:8px;height:1px;background:#d8d8d8"></div>
<div class="a" style="left:0;top:295px;width:8px;height:1px;background:#6e6e6e"></div>
<div class="a" style="left:0;top:310px;width:8px;height:1px;background:#d8d8d8"></div>
<div class="a" style="left:0;top:311px;width:8px;height:1px;background:#6e6e6e"></div>
<div class="a" style="left:0;top:326px;width:8px;height:1px;background:#d8d8d8"></div>
<div class="a" style="left:0;top:327px;width:8px;height:1px;background:#6e6e6e"></div>
<div class="a" style="left:0;top:353px;width:8px;height:1px;background:#d8d8d8"></div>
<div class="a" style="left:0;top:354px;width:8px;height:1px;background:#6e6e6e"></div>
<div class="a" style="left:0;top:385px;width:8px;height:1px;background:#d8d8d8"></div>
<div class="a" style="left:0;top:386px;width:8px;height:1px;background:#6e6e6e"></div>
<div class="a" style="left:0;top:401px;width:8px;height:1px;background:#d8d8d8"></div>
<div class="a" style="left:0;top:402px;width:8px;height:1px;background:#6e6e6e"></div>
<div class="a" style="left:0;top:417px;width:8px;height:1px;background:#d8d8d8"></div>
<div class="a" style="left:0;top:418px;width:8px;height:1px;background:#6e6e6e"></div>
<div class="a" style="left:0;top:433px;width:8px;height:1px;background:#d8d8d8"></div>
<div class="a" style="left:0;top:434px;width:8px;height:1px;background:#6e6e6e"></div>
<div class="a" style="left:0;top:449px;width:8px;height:1px;background:#d8d8d8"></div>
<div class="a" style="left:0;top:450px;width:8px;height:1px;background:#6e6e6e"></div>
<div class="a" style="left:0;top:465px;width:8px;height:1px;background:#d8d8d8"></div>
<div class="a" style="left:0;top:466px;width:8px;height:1px;background:#6e6e6e"></div>
<div class="a" style="left:0;top:481px;width:8px;height:1px;background:#d8d8d8"></div>
<div class="a" style="left:0;top:482px;width:8px;height:1px;background:#6e6e6e"></div>
<div class="a" style="left:0;top:497px;width:8px;height:1px;background:#d8d8d8"></div>
<div class="a" style="left:0;top:498px;width:8px;height:1px;background:#6e6e6e"></div>
<div class="a" style="left:0;top:513px;width:8px;height:1px;background:#d8d8d8"></div>
<div class="a" style="left:0;top:514px;width:8px;height:1px;background:#6e6e6e"></div>
<div class="a" style="left:0;top:529px;width:8px;height:1px;background:#d8d8d8"></div>
<div class="a" style="left:0;top:530px;width:8px;height:1px;background:#6e6e6e"></div>
<div class="a" style="left:0;top:545px;width:8px;height:1px;background:#d8d8d8"></div>
<div class="a" style="left:0;top:546px;width:8px;height:1px;background:#6e6e6e"></div>
<div class="a" style="left:0;top:561px;width:8px;height:1px;background:#d8d8d8"></div>
<div class="a" style="left:0;top:562px;width:8px;height:1px;background:#6e6e6e"></div>
<div class="a" style="left:0;top:577px;width:8px;height:1px;background:#d8d8d8"></div>
<div class="a" style="left:0;top:578px;width:8px;height:1px;background:#6e6e6e"></div>
<div class="a" style="left:0;top:593px;width:8px;height:1px;background:#d8d8d8"></div>
<div class="a" style="left:0;top:594px;width:8px;height:1px;background:#6e6e6e"></div>
<div class="a" style="left:0;top:609px;width:8px;height:1px;background:#d8d8d8"></div>
<div class="a" style="left:0;top:610px;width:8px;height:1px;background:#6e6e6e"></div>
<div class="a" style="left:0;top:625px;width:8px;height:1px;background:#d8d8d8"></div>
<div class="a" style="left:0;top:626px;width:8px;height:1px;background:#6e6e6e"></div>
<div class="a" style="left:0;top:641px;width:8px;height:1px;background:#d8d8d8"></div>
<div class="a" style="left:0;top:642px;width:8px;height:1px;background:#6e6e6e"></div>
<div class="a" style="left:0;top:657px;width:8px;height:1px;background:#d8d8d8"></div>
<div class="a" style="left:0;top:658px;width:8px;height:1px;background:#6e6e6e"></div>
<div class="a" style="left:0;top:673px;width:8px;height:1px;background:#d8d8d8"></div>
<div class="a" style="left:0;top:674px;width:8px;height:1px;background:#6e6e6e"></div>
<div class="a" style="left:0;top:689px;width:8px;height:1px;background:#d8d8d8"></div>
<div class="a" style="left:0;top:690px;width:8px;height:1px;background:#6e6e6e"></div>
<div class="a" style="left:0;top:705px;width:8px;height:1px;background:#d8d8d8"></div>
<div class="a" style="left:0;top:706px;width:8px;height:1px;background:#6e6e6e"></div>
<div class="a" style="left:0;top:721px;width:8px;height:1px;background:#d8d8d8"></div>
<div class="a" style="left:0;top:722px;width:8px;height:1px;background:#6e6e6e"></div>
<div class="a" style="left:0;top:737px;width:8px;height:1px;background:#d8d8d8"></div>
<div class="a" style="left:0;top:738px;width:8px;height:1px;background:#6e6e6e"></div>
<div class="a" style="left:0;top:753px;width:8px;height:1px;background:#d8d8d8"></div>
<div class="a" style="left:0;top:754px;width:8px;height:1px;background:#6e6e6e"></div>
<div class="a" style="left:0;top:769px;width:8px;height:1px;background:#d8d8d8"></div>
<div class="a" style="left:0;top:770px;width:8px;height:1px;background:#6e6e6e"></div>
<div class="a" style="left:0;top:785px;width:8px;height:1px;background:#d8d8d8"></div>
<div class="a" style="left:0;top:786px;width:8px;height:1px;background:#6e6e6e"></div>
<div class="a" style="left:0;top:801px;width:8px;height:1px;background:#d8d8d8"></div>
<div class="a" style="left:0;top:802px;width:8px;height:1px;background:#6e6e6e"></div>
<div class="a" style="left:0;top:817px;width:8px;height:1px;background:#d8d8d8"></div>
<div class="a" style="left:0;top:818px;width:8px;height:1px;background:#6e6e6e"></div>
<div class="a" style="left:0;top:833px;width:8px;height:1px;background:#d8d8d8"></div>
<div class="a" style="left:0;top:834px;width:8px;height:1px;background:#6e6e6e"></div>
<div class="a" style="left:0;top:849px;width:8px;height:1px;background:#d8d8d8"></div>
<div class="a" style="left:0;top:850px;width:8px;height:1px;background:#6e6e6e"></div>
<div class="a" style="left:0;top:865px;width:8px;height:1px;background:#d8d8d8"></div>
<div class="a" style="left:0;top:866px;width:8px;height:1px;background:#6e6e6e"></div>
<div class="a" style="left:0;top:881px;width:8px;height:1px;background:#d8d8d8"></div>
<div class="a" style="left:0;top:882px;width:8px;height:1px;background:#6e6e6e"></div>
<div class="a" style="left:0;top:530px;width:8px;height:15px;background:#6a6a6a"></div>
<div class="a" style="left:10px;top:245px;width:1591px;height:1px;background:#5e5e5e"></div>
<div class="a" style="left:10px;top:246px;width:1591px;height:1px;background:#000"></div>
<div class="a" style="left:10px;top:245px;width:1px;height:140px;background:#000"></div>
<div class="a" style="left:313px;top:245px;width:1px;height:81px;background:#000"></div>
<div class="a" style="left:10px;top:325px;width:1591px;height:2px;background:#000"></div>
<div class="a" style="left:510px;top:327px;width:1px;height:563px;background:#7a7a7a"></div>
<div class="a" style="left:1032px;top:327px;width:1px;height:563px;background:#7a7a7a"></div>
<div class="a" style="left:1525px;top:327px;width:1px;height:563px;background:#7a7a7a"></div>
<div class="a" style="left:11px;top:353px;width:1590px;height:1px;background:#4a7ebf"></div>
<div class="a" style="left:11px;top:354px;width:1590px;height:31px;background:#9dc3e6"></div>
<div class="a" style="left:10px;top:385px;width:1591px;height:1px;background:#000"></div>
<div class="a" style="left:65px;top:354px;width:1px;height:31px;background:#000"></div>
<div class="a" style="left:129px;top:354px;width:1px;height:31px;background:#000"></div>
<div class="a" style="left:313px;top:354px;width:1px;height:31px;background:#000"></div>
<div class="a" style="left:510px;top:354px;width:1px;height:31px;background:#000"></div>
<div class="a" style="left:813px;top:354px;width:1px;height:31px;background:#000"></div>
<div class="a" style="left:874px;top:354px;width:1px;height:31px;background:#000"></div>
<div class="a" style="left:1032px;top:354px;width:1px;height:31px;background:#000"></div>
<div class="a" style="left:1232px;top:354px;width:1px;height:31px;background:#000"></div>
<div class="a" style="left:1432px;top:354px;width:1px;height:31px;background:#000"></div>
<div class="a" style="left:1525px;top:354px;width:1px;height:31px;background:#000"></div>
<div class="ddb" style="left:50px;top:370px"></div>
<div class="ddb" style="left:114px;top:370px"></div>
<div class="ddb" style="left:298px;top:370px"></div>
<div class="ddb" style="left:495px;top:370px"></div>
<div class="ddb" style="left:798px;top:370px"></div>
<div class="ddb" style="left:859px;top:370px"></div>
<div class="ddb" style="left:1017px;top:370px"></div>
<div class="ddb" style="left:1217px;top:370px"></div>
<div class="ddb" style="left:1417px;top:370px"></div>
<div class="ddb" style="left:1510px;top:370px"></div>
<div class="a" style="left:10px;top:401px;width:1591px;height:1px;background:#4a7ebf"></div>
<div class="a" style="left:10px;top:417px;width:1591px;height:1px;background:#4a7ebf"></div>
<div class="a" style="left:10px;top:433px;width:1591px;height:1px;background:#4a7ebf"></div>
<div class="a" style="left:10px;top:449px;width:1591px;height:1px;background:#4a7ebf"></div>
<div class="a" style="left:10px;top:465px;width:1591px;height:1px;background:#4a7ebf"></div>
<div class="a" style="left:10px;top:481px;width:1591px;height:1px;background:#4a7ebf"></div>
<div class="a" style="left:10px;top:497px;width:1591px;height:1px;background:#4a7ebf"></div>
<div class="a" style="left:10px;top:513px;width:1591px;height:1px;background:#4a7ebf"></div>
<div class="a" style="left:10px;top:529px;width:1591px;height:1px;background:#4a7ebf"></div>
<div class="a" style="left:10px;top:545px;width:1591px;height:1px;background:#4a7ebf"></div>
<div class="a" style="left:10px;top:561px;width:1591px;height:1px;background:#4a7ebf"></div>
<div class="a" style="left:10px;top:577px;width:1591px;height:1px;background:#4a7ebf"></div>
<div class="a" style="left:10px;top:593px;width:1591px;height:1px;background:#4a7ebf"></div>
<div class="a" style="left:10px;top:609px;width:1591px;height:1px;background:#4a7ebf"></div>
<div class="a" style="left:10px;top:625px;width:1591px;height:1px;background:#4a7ebf"></div>
<div class="a" style="left:10px;top:641px;width:1591px;height:1px;background:#4a7ebf"></div>
<div class="a" style="left:10px;top:657px;width:1591px;height:1px;background:#4a7ebf"></div>
<div class="a" style="left:10px;top:673px;width:1591px;height:1px;background:#4a7ebf"></div>
<div class="a" style="left:10px;top:689px;width:1591px;height:1px;background:#4a7ebf"></div>
<div class="a" style="left:10px;top:705px;width:1591px;height:1px;background:#4a7ebf"></div>
<div class="a" style="left:10px;top:721px;width:1591px;height:1px;background:#4a7ebf"></div>
<div class="a" style="left:10px;top:737px;width:1591px;height:1px;background:#4a7ebf"></div>
<div class="a" style="left:10px;top:753px;width:1591px;height:1px;background:#4a7ebf"></div>
<div class="a" style="left:10px;top:769px;width:1591px;height:1px;background:#4a7ebf"></div>
<div class="a" style="left:10px;top:785px;width:1591px;height:1px;background:#4a7ebf"></div>
<div class="a" style="left:10px;top:801px;width:1591px;height:1px;background:#4a7ebf"></div>
<div class="a" style="left:10px;top:817px;width:1591px;height:1px;background:#4a7ebf"></div>
<div class="a" style="left:10px;top:833px;width:1591px;height:1px;background:#4a7ebf"></div>
<div class="a" style="left:10px;top:849px;width:1591px;height:1px;background:#4a7ebf"></div>
<div class="a" style="left:10px;top:865px;width:1591px;height:1px;background:#4a7ebf"></div>
<div class="a" style="left:10px;top:881px;width:1591px;height:1px;background:#4a7ebf"></div>
<div class="a" style="left:10px;top:386px;width:1px;height:504px;background:#4a7ebf"></div>
<div class="ht" style="left:10px;width:55px;text-align:center;">S/N</div>
<div class="ht" style="left:65px;width:64px;text-align:center;">TYPE</div>
<div class="ht" style="left:131px;">EQUIPMENT ITEM NUMBER</div>
<div class="ht" style="left:315px;">FUNCTIONAL DESIGNATION</div>
<div class="ht" style="left:512px;">SYSTEM DESIGNATION</div>
<div class="ht" style="left:813px;width:61px;text-align:center;">PIC</div>
<div class="ht" style="left:876px;">SEATING ITEM NUMBER</div>
<div class="ht" style="left:1034px;">DRAWING/DOCUMENT NUMBER</div>
<div class="ht" style="left:1234px;">Column1</div>
<div class="ht" style="left:1432px;width:93px;text-align:center;">ZONE/BLOCK</div>
<div class="ht2" style="left:1525px;width:90px;top:354px;text-align:center">ZONE<br>DISTRIBUTION</div>
<div class="title" style="left:916px;top:268px">MAIN SEATING</div>
<div id="grid">
<div class="ch" style="left:9px;width:56px">A</div>
<div class="ch" style="left:65px;width:64px">B</div>
<div class="ch" style="left:129px;width:184px">C</div>
<div class="ch" style="left:313px;width:197px">D</div>
<div class="ch" style="left:510px;width:303px">E</div>
<div class="ch sel" style="left:813px;width:61px">F</div>
<div class="ch" style="left:874px;width:158px">G</div>
<div class="ch" style="left:1032px;width:200px">H</div>
<div class="ch" style="left:1232px;width:200px">I</div>
<div class="ch" style="left:1432px;width:93px">J</div>
<div class="ch" style="left:1525px;width:91px">K</div>
<div class="chsep" style="left:65px"></div>
<div class="chsep" style="left:129px"></div>
<div class="chsep" style="left:313px"></div>
<div class="chsep" style="left:510px"></div>
<div class="chsep" style="left:813px"></div>
<div class="chsep" style="left:874px"></div>
<div class="chsep" style="left:1032px"></div>
<div class="chsep" style="left:1232px"></div>
<div class="chsep" style="left:1432px"></div>
<div class="chsep" style="left:1525px"></div>
<div class="c ac" style="left:11px;top:385px;width:53px">680</div>
<div class="c ac" style="left:66px;top:385px;width:62px">DWG</div>
<div class="c al" style="left:131px;top:385px;width:182px">31300-00-00034</div>
<div class="c al" style="left:315px;top:385px;width:195px">230V distribution panel for emergency lighting</div>
<div class="c al" style="left:512px;top:385px;width:301px">BATTERIES, SERVICE FACILITIES AND UPS</div>
<div class="c ac" style="left:814px;top:385px;width:59px">BNS</div>
<div class="c al" style="left:876px;top:385px;width:156px">31300-02-00034</div>
<div class="c al" style="left:1034px;top:385px;width:198px">18313-02-02202-04</div>
<div class="c al" style="left:1234px;top:385px;width:198px">COMPLETED</div>
<div class="c ac" style="left:1433px;top:385px;width:91px">01-G-2</div>
<div class="c ac" style="left:1526px;top:385px;width:89px">AFT</div>
<div class="c ac" style="left:11px;top:401px;width:53px">681</div>
<div class="c ac" style="left:66px;top:401px;width:62px">DWG</div>
<div class="c al" style="left:131px;top:401px;width:182px">33000-00-00009</div>
<div class="c al" style="left:315px;top:401px;width:195px">230V distribution panel for lighting DBL24</div>
<div class="c al" style="left:512px;top:401px;width:301px">LIGHTING SYSTEMS</div>
<div class="c ac" style="left:814px;top:401px;width:59px">STRAND</div>
<div class="c al" style="left:876px;top:401px;width:156px">33000-02-00009</div>
<div class="c al" style="left:1034px;top:401px;width:198px">18330-02-02102-01</div>
<div class="c al" style="left:1234px;top:401px;width:198px">COMPLETED</div>
<div class="c ac" style="left:1433px;top:401px;width:91px">01-G-2</div>
<div class="c ac" style="left:1526px;top:401px;width:89px">AFT</div>
<div class="c ac" style="left:11px;top:417px;width:53px">682</div>
<div class="c al" style="left:131px;top:417px;width:182px">55510-00-00008</div>
<div class="c al" style="left:315px;top:417px;width:195px">AVIA POWDER FOAM UNIT 2</div>
<div class="c al" style="left:512px;top:417px;width:301px">FOAM FIXED FIRE EXTINGUISHING SYSTEM</div>
<div class="c ac" style="left:814px;top:417px;width:59px">BNS</div>
<div class="c al" style="left:876px;top:417px;width:156px">55510-02-00008</div>
<div class="c al" style="left:1234px;top:417px;width:198px">0</div>
<div class="c ac" style="left:1433px;top:417px;width:91px">01-G-2</div>
<div class="c ac" style="left:1526px;top:417px;width:89px">AFT</div>
<div class="c ac" style="left:11px;top:433px;width:53px">683</div>
<div class="c al" style="left:131px;top:433px;width:182px">49250-00-00001</div>
<div class="c al" style="left:315px;top:433px;width:195px">Control Cabinet</div>
<div class="c al" style="left:512px;top:433px;width:301px">HELICOPTER VISUAL LANDING AIDS SYSTEM</div>
<div class="c ac" style="left:814px;top:433px;width:59px">BNS</div>
<div class="c al" style="left:876px;top:433px;width:156px">49250-02-00001</div>
<div class="c al" style="left:1234px;top:433px;width:198px">0</div>
<div class="c ac" style="left:1433px;top:433px;width:91px">01-G-1</div>
<div class="c ac" style="left:1526px;top:433px;width:89px">AFT</div>
<div class="c ac" style="left:11px;top:449px;width:53px">684</div>
<div class="c al" style="left:131px;top:449px;width:182px">31130-00-00001</div>
<div class="c al" style="left:315px;top:449px;width:195px">ENGINE COOLER RADIATOR EDG</div>
<div class="c al" style="left:512px;top:449px;width:301px">DG AND EDG SEAWATER COOLING SYSTEM</div>
<div class="c ac" style="left:814px;top:449px;width:59px">BNS</div>
<div class="c al" style="left:876px;top:449px;width:156px">31130-02-00001</div>
<div class="c al" style="left:1034px;top:449px;width:198px">18311-02-02201-02</div>
<div class="c al" style="left:1234px;top:449px;width:198px">COMPLETED</div>
<div class="c ac" style="left:1433px;top:449px;width:91px">01-G-1</div>
<div class="c ac" style="left:1526px;top:449px;width:89px">AFT</div>
<div class="c ac" style="left:11px;top:465px;width:53px">685</div>
<div class="c ac" style="left:66px;top:465px;width:62px">DWG</div>
<div class="c al" style="left:131px;top:465px;width:182px">31200-00-00001</div>
<div class="c al" style="left:315px;top:465px;width:195px">EMERGENCY DG</div>
<div class="c al" style="left:512px;top:465px;width:301px">EMERGENCY GENERATOR</div>
<div class="c ac" style="left:814px;top:465px;width:59px">BNS</div>
<div class="c al" style="left:876px;top:465px;width:156px">31200-02-00001</div>
<div class="c al" style="left:1034px;top:465px;width:198px">18312-02-02201-01</div>
<div class="c al" style="left:1234px;top:465px;width:198px">COMPLETED</div>
<div class="c ac" style="left:1433px;top:465px;width:91px">01-G-1</div>
<div class="c ac" style="left:1526px;top:465px;width:89px">AFT</div>
<div class="c ac" style="left:11px;top:481px;width:53px">686</div>
<div class="c ac" style="left:66px;top:481px;width:62px">DWG</div>
<div class="c al" style="left:131px;top:481px;width:182px">32200-00-00001</div>
<div class="c al" style="left:315px;top:481px;width:195px">Emergency Switchboard ESB3</div>
<div class="c al" style="left:512px;top:481px;width:301px">EMERGENCY POWER SUPPLY SYSTEM</div>
<div class="c ac" style="left:814px;top:481px;width:59px">STRAND</div>
<div class="c al" style="left:876px;top:481px;width:156px">32200-02-00001</div>
<div class="c al" style="left:1034px;top:481px;width:198px">18322-02-02201-01</div>
<div class="c al" style="left:1234px;top:481px;width:198px">COMPLETED</div>
<div class="c ac" style="left:1433px;top:481px;width:91px">01-G-1</div>
<div class="c ac" style="left:1526px;top:481px;width:89px">AFT</div>
<div class="c ac" style="left:11px;top:497px;width:53px">687</div>
<div class="c ac" style="left:66px;top:497px;width:62px">DWG</div>
<div class="c al" style="left:131px;top:497px;width:182px">51410-00-00028</div>
<div class="c al" style="left:315px;top:497px;width:195px">Air Treatment Unit ATU3414</div>
<div class="c al" style="left:512px;top:497px;width:301px">AC SYSTEM</div>
<div class="c ac" style="left:814px;top:497px;width:59px">BNS</div>
<div class="c al" style="left:876px;top:497px;width:156px">51410-02-00028</div>
<div class="c al" style="left:1034px;top:497px;width:198px">18514-02-02201-01</div>
<div class="c al" style="left:1234px;top:497px;width:198px">COMPLETED</div>
<div class="c ac" style="left:1433px;top:497px;width:91px">01-G-1</div>
<div class="c ac" style="left:1526px;top:497px;width:89px">AFT</div>
<div class="c ac" style="left:11px;top:513px;width:53px">688</div>
<div class="c ac" style="left:66px;top:513px;width:62px">DWG</div>
<div class="c al" style="left:131px;top:513px;width:182px">51200-00-00005</div>
<div class="c al" style="left:315px;top:513px;width:195px">Fresh Air Fan AF3401</div>
<div class="c al" style="left:512px;top:513px;width:301px">VENTILATION SYSTEM (NON MACHINERY SPACES)</div>
<div class="c ac" style="left:814px;top:513px;width:59px">STRAND</div>
<div class="c al" style="left:876px;top:513px;width:156px">51200-02-00005</div>
<div class="c al" style="left:1034px;top:513px;width:198px">18512-02-02201-01</div>
<div class="c al" style="left:1234px;top:513px;width:198px">COMPLETED</div>
<div class="c ac" style="left:1433px;top:513px;width:91px">01-G-1</div>
<div class="c ac" style="left:1526px;top:513px;width:89px">AFT</div>
<div class="c ac" style="left:11px;top:529px;width:53px">689</div>
<div class="c ac" style="left:66px;top:529px;width:62px">DWG</div>
<div class="c al" style="left:131px;top:529px;width:182px">51200-00-00012</div>
<div class="c al" style="left:315px;top:529px;width:195px">Booster Fan BF3302</div>
<div class="c al" style="left:512px;top:529px;width:301px">VENTILATION SYSTEM (NON MACHINERY SPACES)</div>
<div class="c ac" style="left:814px;top:529px;width:59px">STRAND</div>
<div class="c al" style="left:876px;top:529px;width:156px">51200-02-00012</div>
<div class="c al" style="left:1034px;top:529px;width:198px">18512-02-02101-01</div>
<div class="c al" style="left:1234px;top:529px;width:198px">COMPLETED</div>
<div class="c ac" style="left:1433px;top:529px;width:91px">01-G-1</div>
<div class="c ac" style="left:1526px;top:529px;width:89px">AFT</div>
<div class="c ac" style="left:11px;top:545px;width:53px">690</div>
<div class="c al" style="left:131px;top:545px;width:182px">55120-00-00024</div>
<div class="c al" style="left:315px;top:545px;width:195px">MP AIR RECEIVER FOR EDG</div>
<div class="c al" style="left:512px;top:545px;width:301px">MEDIUM PRESSURE AIR SYSTEM</div>
<div class="c ac" style="left:814px;top:545px;width:59px">BNS</div>
<div class="c al" style="left:876px;top:545px;width:156px">55120-02-00024</div>
<div class="c al" style="left:1234px;top:545px;width:198px">0</div>
<div class="c ac" style="left:1433px;top:545px;width:91px">01-G-1</div>
<div class="c ac" style="left:1526px;top:545px;width:89px">AFT</div>
<div class="c ac" style="left:11px;top:561px;width:53px">691</div>
<div class="c al" style="left:131px;top:561px;width:182px">51200-00-00082</div>
<div class="c al" style="left:315px;top:561px;width:195px">Separator SEP3421 L180XW1000XH1000</div>
<div class="c al" style="left:512px;top:561px;width:301px">VENTILATION SYSTEM (NON MACHINERY SPACES)</div>
<div class="c ac" style="left:814px;top:561px;width:59px">BNS</div>
<div class="c al" style="left:1234px;top:561px;width:198px">0</div>
<div class="c ac" style="left:1433px;top:561px;width:91px">01-G-1</div>
<div class="c ac" style="left:1526px;top:561px;width:89px">AFT</div>
<div class="c ac" style="left:11px;top:577px;width:53px">692</div>
<div class="c al" style="left:131px;top:577px;width:182px">31140-00-00009</div>
<div class="c al" style="left:315px;top:577px;width:195px">FUEL OIL FILTER EDG</div>
<div class="c al" style="left:512px;top:577px;width:301px">DG AND EDG FUEL OIL SYSTEM</div>
<div class="c ac" style="left:814px;top:577px;width:59px">BNS</div>
<div class="c al" style="left:1234px;top:577px;width:198px">IN PROGRESS</div>
<div class="c ac" style="left:1433px;top:577px;width:91px">01-G-1</div>
<div class="c ac" style="left:1526px;top:577px;width:89px">AFT</div>
<div class="c ac" style="left:11px;top:593px;width:53px">693</div>
<div class="c al" style="left:131px;top:593px;width:182px">49250-04-00001</div>
<div class="c al" style="left:315px;top:593px;width:195px">Aviation Office Table</div>
<div class="c al" style="left:512px;top:593px;width:301px">HELICOPTER VISUAL LANDING AIDS SYSTEM</div>
<div class="c ac" style="left:814px;top:593px;width:59px">FP APIC</div>
<div class="c al" style="left:1234px;top:593px;width:198px">IN PROGRESS</div>
<div class="c ac" style="left:1433px;top:593px;width:91px">01-G-1</div>
<div class="c ac" style="left:1526px;top:593px;width:89px">AFT</div>
<div class="c ac" style="left:11px;top:609px;width:53px">694</div>
<div class="c ac" style="left:66px;top:609px;width:62px">DWG</div>
<div class="c al" style="left:131px;top:609px;width:182px">33000-00-00004</div>
<div class="c al" style="left:315px;top:609px;width:195px">230V distribution panel for lighting DBL15</div>
<div class="c al" style="left:512px;top:609px;width:301px">LIGHTING SYSTEMS</div>
<div class="c ac" style="left:814px;top:609px;width:59px">STRAND</div>
<div class="c al" style="left:876px;top:609px;width:156px">33000-02-00004</div>
<div class="c al" style="left:1034px;top:609px;width:198px">18330-02-02201-01</div>
<div class="c al" style="left:1234px;top:609px;width:198px">COMPLETED</div>
<div class="c ac" style="left:1433px;top:609px;width:91px">01-G-1</div>
<div class="c ac" style="left:1526px;top:609px;width:89px">AFT</div>
<div class="c ac" style="left:11px;top:625px;width:53px">695</div>
<div class="c al" style="left:131px;top:625px;width:182px">55510-00-00007</div>
<div class="c al" style="left:315px;top:625px;width:195px">AVIA POWDER FOAM UNIT 1</div>
<div class="c al" style="left:512px;top:625px;width:301px">FOAM FIXED FIRE EXTINGUISHING SYSTEM</div>
<div class="c ac" style="left:814px;top:625px;width:59px">BNS</div>
<div class="c al" style="left:876px;top:625px;width:156px">55510-02-00007</div>
<div class="c al" style="left:1234px;top:625px;width:198px">0</div>
<div class="c ac" style="left:1433px;top:625px;width:91px">01-G-1</div>
<div class="c ac" style="left:1526px;top:625px;width:89px">AFT</div>
<div class="c ac" style="left:11px;top:641px;width:53px">696</div>
<div class="c al" style="left:131px;top:641px;width:182px">55530-00-00102</div>
<div class="c al" style="left:315px;top:641px;width:195px">RADOME EXTINGUISHING BATTERY</div>
<div class="c al" style="left:512px;top:641px;width:301px">GASEOUS FIRE SUPRESSION SYSTEM (FM200 or NOVEC 1</div>
<div class="c ac" style="left:814px;top:641px;width:59px">BNS</div>
<div class="c al" style="left:1234px;top:641px;width:198px">0</div>
<div class="c ac" style="left:1433px;top:641px;width:91px">TBC</div>
<div class="c ac" style="left:1526px;top:641px;width:89px">AFT</div>
<div class="c ac" style="left:11px;top:657px;width:53px">697</div>
<div class="c al" style="left:131px;top:657px;width:182px">31300-00-00038</div>
<div class="c al" style="left:315px;top:657px;width:195px">24V Charger Panel EB7</div>
<div class="c al" style="left:512px;top:657px;width:301px">BATTERIES, SERVICE FACILITIES AND UPS</div>
<div class="c ac" style="left:814px;top:657px;width:59px">BNS</div>
<div class="c al" style="left:1234px;top:657px;width:198px">IN PROGRESS</div>
<div class="c ac" style="left:1433px;top:657px;width:91px">TBC</div>
<div class="c ac" style="left:1526px;top:657px;width:89px">AFT</div>
<div class="c ac" style="left:11px;top:673px;width:53px">698</div>
<div class="c al" style="left:131px;top:673px;width:182px">31300-00-00039</div>
<div class="c al" style="left:315px;top:673px;width:195px">24V Charger Panel EB8</div>
<div class="c al" style="left:512px;top:673px;width:301px">BATTERIES, SERVICE FACILITIES AND UPS</div>
<div class="c ac" style="left:814px;top:673px;width:59px">BNS</div>
<div class="c al" style="left:876px;top:673px;width:156px">31300-02-00039</div>
<div class="c al" style="left:1034px;top:673px;width:198px">18313-02-00202-02</div>
<div class="c al" style="left:1234px;top:673px;width:198px">COMPLETED</div>
<div class="yel" style="left:1432px;top:673px;width:93px"></div>
<div class="c ac" style="left:1433px;top:673px;width:91px">3-J</div>
<div class="c ac" style="left:1526px;top:673px;width:89px">AFT</div>
<div class="c ac" style="left:11px;top:689px;width:53px">699</div>
<div class="c al" style="left:131px;top:689px;width:182px">31300-00-00040</div>
<div class="c al" style="left:315px;top:689px;width:195px">24V Charger Panel EB9</div>
<div class="c al" style="left:512px;top:689px;width:301px">BATTERIES, SERVICE FACILITIES AND UPS</div>
<div class="c ac" style="left:814px;top:689px;width:59px">BNS</div>
<div class="c al" style="left:876px;top:689px;width:156px">31300-02-00039</div>
<div class="c al" style="left:1034px;top:689px;width:198px">18313-02-00202-02</div>
<div class="c al" style="left:1234px;top:689px;width:198px">COMPLETED</div>
<div class="yel" style="left:1432px;top:689px;width:93px"></div>
<div class="c ac" style="left:1433px;top:689px;width:91px">3-J</div>
<div class="c ac" style="left:1526px;top:689px;width:89px">AFT</div>
<div class="c ac" style="left:11px;top:705px;width:53px">700</div>
<div class="c al" style="left:131px;top:705px;width:182px">31300-00-00041</div>
<div class="c al" style="left:315px;top:705px;width:195px">24V Charger Panel EB10</div>
<div class="c al" style="left:512px;top:705px;width:301px">BATTERIES, SERVICE FACILITIES AND UPS</div>
<div class="c ac" style="left:814px;top:705px;width:59px">BNS</div>
<div class="c al" style="left:1234px;top:705px;width:198px">#N/A</div>
<div class="c ac" style="left:1433px;top:705px;width:91px">TBC</div>
<div class="c ac" style="left:1526px;top:705px;width:89px">AFT</div>
<div class="c ac" style="left:11px;top:721px;width:53px">701</div>
<div class="c al" style="left:131px;top:721px;width:182px">31300-00-00044</div>
<div class="c al" style="left:315px;top:721px;width:195px">24V battery panel EB9</div>
<div class="c al" style="left:512px;top:721px;width:301px">BATTERIES, SERVICE FACILITIES AND UPS</div>
<div class="c ac" style="left:814px;top:721px;width:59px">BNS</div>
<div class="c al" style="left:876px;top:721px;width:156px">31300-02-00043</div>
<div class="c al" style="left:1034px;top:721px;width:198px">18313-02-00202-01</div>
<div class="c al" style="left:1234px;top:721px;width:198px">COMPLETED</div>
<div class="yel" style="left:1432px;top:721px;width:93px"></div>
<div class="c ac" style="left:1433px;top:721px;width:91px">3-J</div>
<div class="c ac" style="left:1526px;top:721px;width:89px">AFT</div>
<div class="c ac" style="left:11px;top:737px;width:53px">702</div>
<div class="c al" style="left:131px;top:737px;width:182px">31300-00-00045</div>
<div class="c al" style="left:315px;top:737px;width:195px">24V battery panel EB10</div>
<div class="c al" style="left:512px;top:737px;width:301px">BATTERIES, SERVICE FACILITIES AND UPS</div>
<div class="c ac" style="left:814px;top:737px;width:59px">BNS</div>
<div class="c al" style="left:1234px;top:737px;width:198px">#N/A</div>
<div class="c ac" style="left:1433px;top:737px;width:91px">TBC</div>
<div class="c ac" style="left:1526px;top:737px;width:89px">AFT</div>
<div class="c ac" style="left:11px;top:753px;width:53px">703</div>
<div class="c al" style="left:131px;top:753px;width:182px">31300-00-00050</div>
<div class="c al" style="left:315px;top:753px;width:195px">440/115V UPS</div>
<div class="c al" style="left:512px;top:753px;width:301px">BATTERIES, SERVICE FACILITIES AND UPS</div>
<div class="c ac" style="left:814px;top:753px;width:59px">BNS</div>
<div class="c al" style="left:1234px;top:753px;width:198px">#N/A</div>
<div class="c ac" style="left:1433px;top:753px;width:91px">TBC</div>
<div class="c ac" style="left:1526px;top:753px;width:89px">AFT</div>
<div class="c ac" style="left:11px;top:769px;width:53px">704</div>
<div class="c al" style="left:131px;top:769px;width:182px">31300-00-00051</div>
<div class="c al" style="left:315px;top:769px;width:195px">24V charger panel EB11</div>
<div class="c al" style="left:512px;top:769px;width:301px">BATTERIES, SERVICE FACILITIES AND UPS</div>
<div class="c ac" style="left:814px;top:769px;width:59px">BNS</div>
<div class="c al" style="left:1234px;top:769px;width:198px">#N/A</div>
<div class="c ac" style="left:1433px;top:769px;width:91px">TBC</div>
<div class="c ac" style="left:1526px;top:769px;width:89px">AFT</div>
<div class="c ac" style="left:11px;top:785px;width:53px">705</div>
<div class="c al" style="left:131px;top:785px;width:182px">31300-00-00052</div>
<div class="c al" style="left:315px;top:785px;width:195px">24V charger panel EB12</div>
<div class="c al" style="left:512px;top:785px;width:301px">BATTERIES, SERVICE FACILITIES AND UPS</div>
<div class="c ac" style="left:814px;top:785px;width:59px">BNS</div>
<div class="c al" style="left:1234px;top:785px;width:198px">#N/A</div>
<div class="c ac" style="left:1433px;top:785px;width:91px">TBC</div>
<div class="c ac" style="left:1526px;top:785px;width:89px">AFT</div>
<div class="c ac" style="left:11px;top:801px;width:53px">706</div>
<div class="c al" style="left:131px;top:801px;width:182px">31300-00-00053</div>
<div class="c al" style="left:315px;top:801px;width:195px">24V charger panel EB13</div>
<div class="c al" style="left:512px;top:801px;width:301px">BATTERIES, SERVICE FACILITIES AND UPS</div>
<div class="c ac" style="left:814px;top:801px;width:59px">BNS</div>
<div class="c al" style="left:1234px;top:801px;width:198px">#N/A</div>
<div class="c ac" style="left:1433px;top:801px;width:91px">TBC</div>
<div class="c ac" style="left:1526px;top:801px;width:89px">AFT</div>
<div class="c ac" style="left:11px;top:817px;width:53px">707</div>
<div class="c al" style="left:131px;top:817px;width:182px">31300-00-00054</div>
<div class="c al" style="left:315px;top:817px;width:195px">24V charger panel EB14</div>
<div class="c al" style="left:512px;top:817px;width:301px">BATTERIES, SERVICE FACILITIES AND UPS</div>
<div class="c ac" style="left:814px;top:817px;width:59px">BNS</div>
<div class="c al" style="left:1234px;top:817px;width:198px">#N/A</div>
<div class="c ac" style="left:1433px;top:817px;width:91px">TBC</div>
<div class="c ac" style="left:1526px;top:817px;width:89px">AFT</div>
<div class="c ac" style="left:11px;top:833px;width:53px">708</div>
<div class="c ac" style="left:66px;top:833px;width:62px">DWG</div>
<div class="c al" style="left:131px;top:833px;width:182px">48000-00-00004</div>
<div class="c al" style="left:315px;top:833px;width:195px">fore FCR</div>
<div class="c al" style="left:512px;top:833px;width:301px">FIRE CONTROL RADAR</div>
<div class="c ac" style="left:814px;top:833px;width:59px">BNS</div>
<div class="c al" style="left:876px;top:833px;width:156px">48000-02-00004</div>
<div class="c al" style="left:1034px;top:833px;width:198px">LCS-801016</div>
<div class="c al" style="left:1234px;top:833px;width:198px">COMPLETED</div>
<div class="c ac" style="left:1433px;top:833px;width:91px">03-E</div>
<div class="c ac" style="left:1526px;top:833px;width:89px">FWD</div>
<div class="c ac" style="left:11px;top:849px;width:53px">709</div>
<div class="c ac" style="left:66px;top:849px;width:62px">DWG</div>
<div class="c al" style="left:131px;top:849px;width:182px">45600-00-00002</div>
<div class="c al" style="left:315px;top:849px;width:195px">SMART S Processing Cabinet</div>
<div class="c al" style="left:512px;top:849px;width:301px">MAIN SURVEILLANCE RADAR</div>
<div class="c ac" style="left:814px;top:849px;width:59px">BNS</div>
<div class="c al" style="left:876px;top:849px;width:156px">45600-02-00002</div>
<div class="c al" style="left:1034px;top:849px;width:198px">LCS-801005</div>
<div class="c al" style="left:1234px;top:849px;width:198px">COMPLETED</div>
<div class="c ac" style="left:1433px;top:849px;width:91px">03-E</div>
<div class="c ac" style="left:1526px;top:849px;width:89px">FWD</div>
<div class="c ac" style="left:11px;top:865px;width:53px">710</div>
<div class="c ac" style="left:66px;top:865px;width:62px">DWG</div>
<div class="c al" style="left:131px;top:865px;width:182px">45600-00-00003</div>
<div class="c al" style="left:315px;top:865px;width:195px">SMART S Drive Control and Cooling Cabinet</div>
<div class="c al" style="left:512px;top:865px;width:301px">MAIN SURVEILLANCE RADAR</div>
<div class="c ac" style="left:814px;top:865px;width:59px">BNS</div>
<div class="c al" style="left:876px;top:865px;width:156px">45600-02-00003</div>
<div class="c al" style="left:1034px;top:865px;width:198px">LCS-801006</div>
<div class="c al" style="left:1234px;top:865px;width:198px">COMPLETED</div>
<div class="c ac" style="left:1433px;top:865px;width:91px">03-E</div>
<div class="c ac" style="left:1526px;top:865px;width:89px">FWD</div>
<div class="c ac" style="left:11px;top:881px;width:53px">711</div>
<div class="c ac" style="left:66px;top:881px;width:62px">DWG</div>
<div class="c al" style="left:131px;top:881px;width:182px">45600-00-00004</div>
<div class="c al" style="left:315px;top:881px;width:195px">SMART S Air Drier</div>
<div class="c al" style="left:512px;top:881px;width:301px">MAIN SURVEILLANCE RADAR</div>
<div class="c ac" style="left:814px;top:881px;width:59px">BNS</div>
<div class="c al" style="left:876px;top:881px;width:156px">45600-02-00004</div>
<div class="c al" style="left:1034px;top:881px;width:198px">LCS-801040</div>
<div class="c al" style="left:1234px;top:881px;width:198px">COMPLETED</div>
<div class="c ac" style="left:1433px;top:881px;width:91px">03-E</div>
<div class="c ac" style="left:1526px;top:881px;width:89px">FWD</div>
</div>
<div class="a" style="left:813px;top:529px;width:62px;height:17px;border:2px solid #000"></div>
<div class="a" style="left:869px;top:540px;width:7px;height:7px;background:#000;border:1px solid #fff"></div>
</div></body></html>
